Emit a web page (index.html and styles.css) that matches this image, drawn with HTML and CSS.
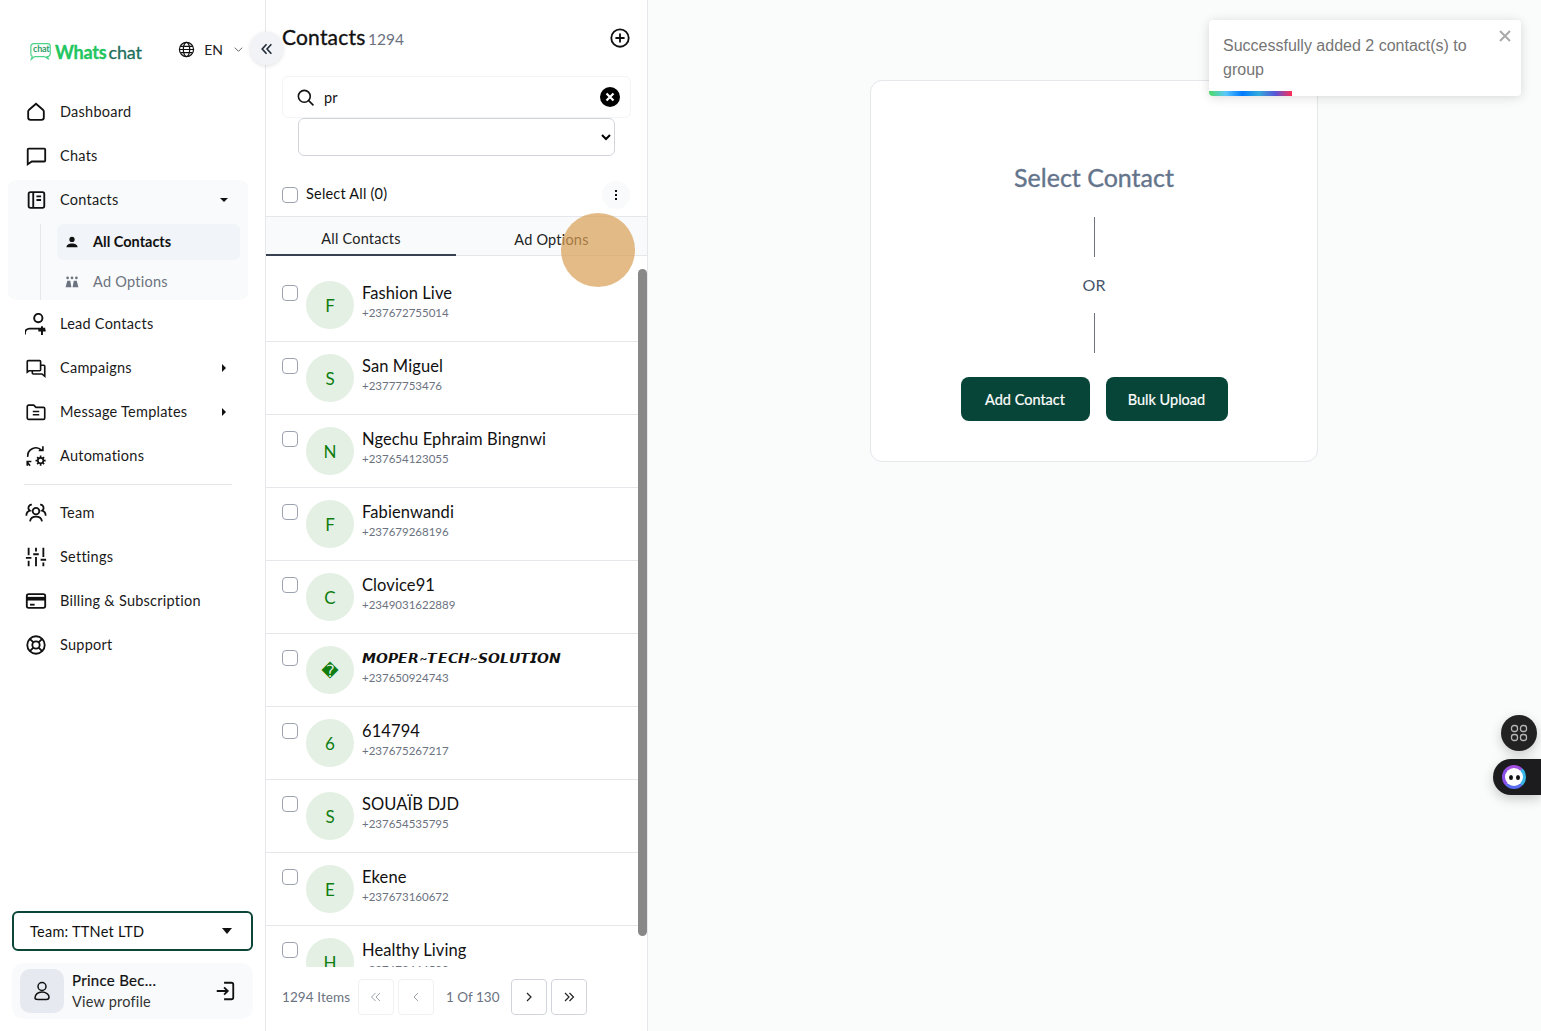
FILE: index.html
```html
<!DOCTYPE html>
<html lang="en">
<head>
  <meta charset="UTF-8" />
  <meta name="viewport" content="width=device-width, initial-scale=1" />
  <title>Contacts - Whatschat</title>
  <link rel="stylesheet" href="styles.css">
</head>
<body>
  <aside class="sidebar">
    <div class="brand-row">
      <div class="logo">
        <svg class="logo-mark" viewBox="0 0 26 20" fill="none" stroke="#4cd38a" stroke-width="1.3"><path d="M5 1.500h15a3 3 0 0 1 3 3v8a3 3 0 0 1-3 3h-.5l2 3-5-3H6l-3.500 3 1-3.200A3 3 0 0 1 2 12.500v-8a3 3 0 0 1 3-3z"/></svg>
        <span class="logo-mini">chat</span>
        <span class="logo-a">Whats</span><span class="logo-b">chat</span>
      </div>
      <div class="lang">
        <svg viewBox="0 0 24 24" fill="none" stroke="#111" stroke-width="1.700"><circle cx="12" cy="12" r="10"/><ellipse cx="12" cy="12" rx="4.500" ry="10"/><path d="M2 12h20M3.500 7.500h17M3.500 16.500h17"/></svg>
        <span>EN</span>
        <svg class="lang-caret" viewBox="0 0 12 12" fill="none" stroke="#555" stroke-width="1"><path d="M2 4l4 4 4-4"/></svg>
      </div>
    </div>
    <button class="collapse" type="button" aria-label="Collapse">
      <svg viewBox="0 0 16 16" fill="none" stroke="#1f2937" stroke-width="1.800"><path d="M7.500 2.500 2.500 8l5 5.500M13 2.500 8 8l5 5.500"/></svg>
    </button>

    <nav class="nav">
      <a class="nav-item"><svg viewBox="0 0 24 24" fill="none" stroke="#111" stroke-width="2"><path d="M3.500 11.500c0-.8.300-1.400 1-2L12 3l7.500 6.500c.7.600 1 1.200 1 2V18a2.500 2.500 0 0 1-2.500 2.500H6A2.500 2.500 0 0 1 3.500 18z"/></svg><span>Dashboard</span></a>
      <a class="nav-item"><svg viewBox="0 0 24 24" fill="none" stroke="#111" stroke-width="2"><path d="M4 4h17a1 1 0 0 1 1 1v12a1 1 0 0 1-1 1H7.500L3 21V5a1 1 0 0 1 1-1z"/></svg><span>Chats</span></a>

      <div class="nav-group">
        <a class="nav-item"><svg viewBox="0 0 24 24" fill="none" stroke="#111" stroke-width="2"><rect x="4" y="3.500" width="17" height="17" rx="2"/><path d="M9 3.500v17M12.500 8h5M12.500 12h5"/></svg><span>Contacts</span><i class="caret-down"></i></a>
        <div class="sub-list">
          <a class="sub-item active"><svg viewBox="0 0 24 24" fill="#111"><circle cx="12" cy="7.500" r="4.500"/><path d="M2.500 21c0-4.500 4.500-6.500 9.500-6.500s9.500 2 9.500 6.500z"/></svg><span>All Contacts</span></a>
          <a class="sub-item"><svg viewBox="0 0 24 24" fill="#6b7280"><circle cx="4.500" cy="5" r="2.300"/><circle cx="12" cy="5" r="2.300"/><circle cx="19.500" cy="5" r="2.300"/><path d="M1 21l3-11h5l2 11zM13 21l2-11h5l3 11z"/></svg><span>Ad Options</span></a>
        </div>
      </div>

      <a class="nav-item"><svg viewBox="0 0 24 24" fill="none" stroke="#111" stroke-width="2.100"><circle cx="14.500" cy="5.500" r="4.500"/><path d="M0 23.500v-1.500a5 5 0 0 1 5-5h17M18.500 14.500v9.500M14.500 19h8"/></svg><span>Lead Contacts</span></a>
      <a class="nav-item"><svg viewBox="0 0 24 24" fill="none" stroke="#111" stroke-width="1.800"><path d="M7 15H4.500l-2 1.500V5a1 1 0 0 1 1-1H16a1 1 0 0 1 1 1v9a1 1 0 0 1-1 1z"/><path d="M17 9h3.500a1 1 0 0 1 1 1v11l-3-2.500H9a1 1 0 0 1-1-1V15"/></svg><span>Campaigns</span><i class="caret-right"></i></a>
      <a class="nav-item"><svg viewBox="0 0 24 24" fill="none" stroke="#111" stroke-width="1.800"><path d="M2.500 6a1.500 1.500 0 0 1 1.500-1.500h5.500l2.500 2.500h8A1.500 1.500 0 0 1 21.500 8.500v10A1.500 1.500 0 0 1 20 20H4a1.500 1.500 0 0 1-1.500-1.500z"/><path d="M8.500 11.500h7M8.500 15h7"/></svg><span>Message Templates</span><i class="caret-right"></i></a>
      <a class="nav-item"><svg viewBox="0 0 24 24" fill="none" stroke="#111" stroke-width="1.800"><path d="M3 13a9 9 0 0 1 15-7.500M2 18l3.500 4.500M2.500 22.500V18H7M19.500 1.500v4.500H15"/><circle cx="17" cy="17" r="3"/><path d="M17 11.500v2.500M17 20v2.500M11.500 17H14M20 17h2.500M13.200 13.200l1.700 1.700M19.100 19.100l1.700 1.700M13.200 20.800l1.700-1.700M19.100 14.900l1.700-1.700"/></svg><span>Automations</span></a>
      <hr class="nav-rule">
      <a class="nav-item"><svg viewBox="0 0 24 24" fill="none" stroke="#111" stroke-width="1.900"><circle cx="12" cy="10" r="3.600"/><path d="M5.500 21c.5-3 3-5 6.500-5s6 2 6.500 5M7.500 3a3.500 3.500 0 0 0-2 6.500c-2.500.7-4 2.500-4 5.500M16.500 3a3.500 3.500 0 0 1 2 6.500c2.500.7 4 2.500 4 5.500"/></svg><span>Team</span></a>
      <a class="nav-item"><svg viewBox="0 0 24 24" fill="none" stroke="#111" stroke-width="2"><path d="M4 2v8M4 16v6M12 2v4M12 12v10M20 2v10M20 18v4M1 13h6M9 9h6M17 15h6" /></svg><span>Settings</span></a>
      <a class="nav-item"><svg viewBox="0 0 24 24" fill="none" stroke="#111" stroke-width="2"><rect x="2" y="4.500" width="20" height="15" rx="2"/><path d="M2 9.500h20" stroke-width="4"/><path d="M5.500 16h5"/></svg><span>Billing &amp; Subscription</span></a>
      <a class="nav-item"><svg viewBox="0 0 24 24" fill="none" stroke="#111" stroke-width="2"><circle cx="12" cy="12" r="9.500"/><circle cx="12" cy="12" r="4"/><path d="M5.300 5.300l3.900 3.900M18.700 5.300l-3.900 3.900M5.300 18.700l3.900-3.900M18.700 18.700l-3.900-3.900"/></svg><span>Support</span></a>
    </nav>

    <div class="side-bottom">
      <div class="team-select"><span>Team: TTNet LTD</span><i class="team-caret"></i></div>
      <div class="profile">
        <div class="profile-pic"><svg viewBox="0 0 24 24" fill="none" stroke="#111" stroke-width="1.500"><circle cx="12" cy="7.500" r="4"/><path d="M5 19c0-3.500 3-6 7-6s7 2.500 7 5c0 1.500-1 2.500-2.500 2.500H8C6 20.500 5 20 5 19z"/></svg></div>
        <div class="profile-text">
          <div class="profile-name">Prince Bec...</div>
          <div class="profile-link">View profile</div>
        </div>
        <svg class="logout" viewBox="0 0 24 24" fill="none" stroke="#111" stroke-width="2"><path d="M11 3h8a2 2 0 0 1 2 2v14a2 2 0 0 1-2 2h-8M3 12h12M11 8l4 4-4 4"/></svg>
      </div>
    </div>
  </aside>

  <section class="contacts">
    <div class="contacts-head">
      <h1>Contacts <span>1294</span></h1>
      <svg viewBox="0 0 24 24" fill="none" stroke="#111" stroke-width="2"><circle cx="12" cy="12" r="9.500"/><path d="M12 7v10M7 12h10"/></svg>
    </div>
    <div class="search">
      <svg class="search-icon" viewBox="0 0 24 24" fill="none" stroke="#111" stroke-width="2"><circle cx="10.500" cy="10.500" r="7.500"/><path d="M16 16l6 6"/></svg>
      <span class="search-text">pr</span>
      <svg class="search-clear" viewBox="0 0 20 20"><circle cx="10" cy="10" r="10" fill="#000"/><path d="M6.500 6.500l7 7M13.500 6.500l-7 7" stroke="#fff" stroke-width="2.200"/></svg>
    </div>
    <select class="filter"><option></option></select>
    <div class="select-all">
      <input type="checkbox" class="check">
      <span>Select All (0)</span>
      <button class="kebab" type="button" aria-label="More"><i></i><i></i><i></i></button>
    </div>
    <div class="tabs">
      <div class="tab active">All Contacts</div>
      <div class="tab">Ad Options</div>
    </div>

    <div class="list">
      <div class="row"><input type="checkbox" class="check"><div class="avatar">F</div><div><div class="name">Fashion Live</div><div class="phone">+237672755014</div></div></div>
      <div class="row"><input type="checkbox" class="check"><div class="avatar">S</div><div><div class="name">San Miguel</div><div class="phone">+23777753476</div></div></div>
      <div class="row"><input type="checkbox" class="check"><div class="avatar">N</div><div><div class="name">Ngechu Ephraim Bingnwi</div><div class="phone">+237654123055</div></div></div>
      <div class="row"><input type="checkbox" class="check"><div class="avatar">F</div><div><div class="name">Fabienwandi</div><div class="phone">+237679268196</div></div></div>
      <div class="row"><input type="checkbox" class="check"><div class="avatar">C</div><div><div class="name">Clovice91</div><div class="phone">+2349031622889</div></div></div>
      <div class="row"><input type="checkbox" class="check"><div class="avatar">&#xFFFD;</div><div><div class="name fancy">𝙈𝙊𝙋𝙀𝙍~𝙏𝙀𝘾𝙃~𝙎𝙊𝙇𝙐𝙏𝙄𝙊𝙉</div><div class="phone">+237650924743</div></div></div>
      <div class="row"><input type="checkbox" class="check"><div class="avatar">6</div><div><div class="name">614794</div><div class="phone">+237675267217</div></div></div>
      <div class="row"><input type="checkbox" class="check"><div class="avatar">S</div><div><div class="name">SOUAÏB DJD</div><div class="phone">+237654535795</div></div></div>
      <div class="row"><input type="checkbox" class="check"><div class="avatar">E</div><div><div class="name">Ekene</div><div class="phone">+237673160672</div></div></div>
      <div class="row"><input type="checkbox" class="check"><div class="avatar">H</div><div><div class="name">Healthy Living</div><div class="phone">+237672444500</div></div></div>
    </div>
    <div class="scroll-thumb"></div>

    <div class="pager">
      <span class="pager-count">1294 Items</span>
      <button class="page-btn off" type="button" aria-label="First"><svg viewBox="0 0 12 12" fill="none" stroke="currentColor" stroke-width="1"><path d="M5.500 2 1.500 6l4 4M10 2 6 6l4 4"/></svg></button>
      <button class="page-btn off" type="button" aria-label="Previous"><svg viewBox="0 0 12 12" fill="none" stroke="currentColor" stroke-width="1"><path d="M8 2 4 6l4 4"/></svg></button>
      <span class="pager-pos">1 Of 130</span>
      <button class="page-btn" type="button" aria-label="Next"><svg viewBox="0 0 12 12" fill="none" stroke="currentColor" stroke-width="1.200"><path d="M4 2l4 4-4 4"/></svg></button>
      <button class="page-btn" type="button" aria-label="Last"><svg viewBox="0 0 12 12" fill="none" stroke="currentColor" stroke-width="1.200"><path d="M2 2l4 4-4 4M6.500 2l4 4-4 4"/></svg></button>
    </div>
  </section>

  <main class="main">
    <div class="card">
      <h2>Select Contact</h2>
      <div class="vline"></div>
      <div class="or">OR</div>
      <div class="vline"></div>
      <div class="card-actions">
        <button class="btn add" type="button">Add Contact</button>
        <button class="btn bulk" type="button">Bulk Upload</button>
      </div>
    </div>
  </main>

  <div class="tap-dot"></div>

  <div class="toast">
    <div class="toast-text">Successfully added 2 contact(s) to group</div>
    <svg class="toast-close" viewBox="0 0 14 14" fill="none" stroke="#aaa" stroke-width="2"><path d="M2 2l10 10M12 2 2 12"/></svg>
    <div class="toast-bar"></div>
  </div>

  <div class="fab">
    <svg viewBox="0 0 20 20" fill="none" stroke="#b5b5b5" stroke-width="1.300"><rect x="2.500" y="2.500" width="6" height="6" rx="2.500"/><rect x="11.500" y="2.500" width="6" height="6" rx="2.500"/><rect x="2.500" y="11.500" width="6" height="6" rx="2.500"/><rect x="11.500" y="11.500" width="6" height="6" rx="2.500"/></svg>
  </div>
  <div class="bot-tab">
    <div class="bot-face"><i></i><i></i></div>
  </div>
</body>
</html>
```

FILE: styles.css
```css
* {
  box-sizing: border-box;
}
html, body {
  height: 100%;
}
body {
  margin: 0;
  height: 1031px;
  overflow: hidden;
  display: flex;
  background: #fafbfb;
  color: #111;
  font-family: 'Lato', 'DejaVu Sans', sans-serif;
  font-size: 15px;
  position: relative;
}
a {
  color: inherit;
  text-decoration: none;
}
button {
  font-family: inherit;
  cursor: pointer;
}

/* sidebar */
.sidebar {
  width: 266px;
  flex-shrink: 0;
  background: #fff;
  border-right: 1px solid #e5e7eb;
  display: flex;
  flex-direction: column;
  position: relative;
}
.brand-row {
  height: 90px;
  padding: 14px 21px 0 29px;
  display: flex;
  align-items: center;
  justify-content: space-between;
}
.logo {
  position: relative;
  display: flex;
  align-items: center;
  padding-left: 26px;
  font-size: 18px;
  font-weight: 700;
  letter-spacing: -0.2px;
}
.logo-mark {
  position: absolute;
  left: 0;
  top: 1px;
  width: 24px;
  height: 19px;
}
.logo-mini {
  position: absolute;
  left: 4px;
  top: 2px;
  font-size: 9px;
  font-weight: 700;
  color: #2f9e6b;
}
.logo-a {
  color: #22c55e;
  margin-right: 2px;
  -webkit-text-stroke: 0.3px #22c55e;
}
.logo-b {
  color: #1f6f5c;
  font-weight: 400;
  -webkit-text-stroke: 0.3px #1f6f5c;
}
.lang {
  display: flex;
  align-items: center;
  gap: 9px;
  margin-top: -5px;
  font-size: 14px;
  color: #222;
}
.lang svg {
  width: 17px;
  height: 17px;
}
.lang .lang-caret {
  width: 11px;
  height: 11px;
  margin-left: 1px;
}
.collapse {
  position: absolute;
  left: 250px;
  top: 32px;
  width: 33px;
  height: 33px;
  border: none;
  border-radius: 50%;
  background: #f1f3f6;
  box-shadow: 0 1px 4px rgba(0,0,0,0.12);
  display: flex;
  align-items: center;
  justify-content: center;
  padding: 0;
  z-index: 5;
}
.collapse svg {
  width: 14px;
  height: 14px;
}
.nav {
  width: 256px;
}
.nav-item {
  height: 44px;
  margin: 0 8px;
  padding: 0 16px;
  display: flex;
  align-items: center;
  gap: 12px;
  font-size: 14.500px;
  letter-spacing: 0.25px;
  color: #1a1a1a;
}
.nav-item span {
  margin-top: -1px;
}
.nav-item > svg {
  width: 24px;
  height: 24px;
  flex-shrink: 0;
  transform: scale(0.92);
}
.nav-group {
  margin: 2px 8px;
  height: 120px;
  background: #f9fafb;
  border-radius: 8px;
}
.nav-group .nav-item {
  margin: 0;
  height: 40px;
}
.caret-down {
  margin-left: auto;
  margin-right: 4px;
  border-left: 4px solid transparent;
  border-right: 4px solid transparent;
  border-top: 4px solid #111;
}
.caret-right {
  margin-left: auto;
  margin-right: 6px;
  border-top: 4px solid transparent;
  border-bottom: 4px solid transparent;
  border-left: 4px solid #111;
}
.sub-list {
  margin: 4px 8px 0 32px;
  padding-left: 16px;
  border-left: 1px solid #e5e7eb;
  display: flex;
  flex-direction: column;
  gap: 4px;
}
.sub-item {
  height: 36px;
  padding: 0 8px;
  display: flex;
  align-items: center;
  gap: 14px;
  border-radius: 6px;
  font-size: 14.500px;
  letter-spacing: 0.25px;
  color: #6b7280;
}
.sub-item span {
  margin-top: -1px;
}
.sub-item svg {
  width: 14px;
  height: 14px;
}
.sub-item.active {
  background: #f1f4f8;
  color: #111;
  font-weight: 700;
  letter-spacing: 0;
}
.nav-rule {
  margin: 6px 24px;
  border: none;
  border-top: 1px solid #e5e7eb;
}
.side-bottom {
  margin-top: auto;
  padding: 0 12px 12px;
  display: flex;
  flex-direction: column;
  gap: 12px;
}
.team-select {
  height: 40px;
  padding: 0 19px 0 16px;
  border: 2px solid #0b4638;
  border-radius: 6px;
  display: flex;
  align-items: center;
  justify-content: space-between;
  font-size: 14.500px;
  letter-spacing: 0.25px;
}
.team-caret {
  border-left: 5px solid transparent;
  border-right: 5px solid transparent;
  border-top: 6px solid #111;
}
.profile {
  height: 56px;
  padding: 0 17px 0 8px;
  background: #f9fafb;
  border-radius: 12px;
  display: flex;
  align-items: center;
  gap: 8px;
}
.profile-pic {
  width: 44px;
  height: 44px;
  border-radius: 10px;
  background: #e6eaf0;
  display: flex;
  align-items: center;
  justify-content: center;
}
.profile-pic svg {
  width: 24px;
  height: 24px;
}
.profile-text {
  flex: 1;
  line-height: 22px;
}
.profile-name {
  font-size: 15px;
  letter-spacing: 0.3px;
  -webkit-text-stroke: 0.2px #111;
}
.profile-link {
  font-size: 14.500px;
  letter-spacing: 0.2px;
  color: #333;
}
.logout {
  width: 22px;
  height: 22px;
}

/* contacts column */
.contacts {
  width: 382px;
  flex-shrink: 0;
  background: #fff;
  border-right: 1px solid #e5e7eb;
  display: flex;
  flex-direction: column;
  position: relative;
}
.contacts-head {
  height: 76px;
  padding: 0 16px;
  display: flex;
  align-items: center;
  justify-content: space-between;
}
.contacts-head h1 {
  margin: -3px 0 0;
  font-size: 21px;
  font-weight: 400;
  letter-spacing: 0.2px;
  -webkit-text-stroke: 0.35px #111;
}
.contacts-head h1 span {
  margin-left: -3px;
  font-size: 15.500px;
  font-weight: 400;
  color: #6b7280;
  letter-spacing: 0;
  -webkit-text-stroke: 0;
}
.contacts-head svg {
  width: 22px;
  height: 22px;
}
.search {
  height: 42px;
  margin: 0 16px;
  padding: 0 10px 0 13px;
  border: 1px solid #f3f4f6;
  border-radius: 6px;
  display: flex;
  align-items: center;
  gap: 9px;
}
.search-icon {
  width: 19px;
  height: 19px;
}
.search-text {
  flex: 1;
  font-size: 14.500px;
}
.search-clear {
  width: 20px;
  height: 20px;
}
.filter {
  height: 38px;
  margin: 0 32px;
  width: 317px;
  background: #fff;
  border: 1px solid #d1d5db;
  border-radius: 6px;
  font-size: 14px;
}
.select-all {
  height: 60px;
  padding: 17px 17px 0 16px;
  display: flex;
  align-items: center;
  gap: 8px;
  font-size: 14.500px;
  letter-spacing: 0.2px;
}
.select-all span {
  margin-top: -2px;
}
.kebab {
  width: 28px;
  height: 28px;
  margin-left: auto;
  padding: 0;
  border: none;
  border-radius: 50%;
  background: #f9fafb;
  display: flex;
  flex-direction: column;
  align-items: center;
  justify-content: center;
  gap: 2px;
}
.kebab i {
  width: 2px;
  height: 2px;
  background: #111;
}
.check {
  appearance: none;
  width: 16px;
  height: 16px;
  margin: 0;
  flex-shrink: 0;
  background: #fff;
  border: 1px solid #9ca3af;
  border-radius: 4px;
}
.tabs {
  height: 40px;
  background: #f9fafb;
  border-top: 1px solid #e5e7eb;
  border-bottom: 1px solid #e5e7eb;
  display: flex;
}
.tab {
  flex: 1;
  margin-bottom: -1px;
  padding-top: 5px;
  display: flex;
  align-items: center;
  justify-content: center;
  font-size: 14.500px;
  letter-spacing: 0.2px;
  color: #222;
}
.tab.active {
  flex: none;
  width: 190px;
  border-bottom: 2px solid #374151;
}
.list {
  flex: 1;
  min-height: 0;
  margin-top: 13px;
  overflow: hidden;
}
.row {
  height: 73px;
  padding: 12px 16px 0;
  border-bottom: 1px solid #e5e7eb;
  display: flex;
  align-items: flex-start;
  gap: 8px;
}
.row .check {
  margin-top: 4px;
}
.avatar {
  width: 48px;
  height: 48px;
  border-radius: 50%;
  background: #e4f0e4;
  color: #0f7d0f;
  display: flex;
  align-items: center;
  justify-content: center;
  font-size: 17px;
  flex-shrink: 0;
}
.name {
  font-size: 16.500px;
  line-height: 24px;
  letter-spacing: 0.1px;
  color: #111;
}
.name.fancy {
  font-size: 13.500px;
}
.phone {
  font-size: 11.500px;
  line-height: 15px;
  color: #6b7280;
}
.scroll-thumb {
  position: absolute;
  right: 0;
  top: 269px;
  width: 9px;
  height: 667px;
  background: #888;
  border-radius: 5px;
}
.pager {
  height: 64px;
  padding: 0 16px 4px;
  display: flex;
  align-items: center;
  font-size: 13.500px;
  color: #6b7280;
}
.pager-count {
  width: 76px;
  letter-spacing: 0.1px;
}
.page-btn {
  width: 36px;
  height: 36px;
  margin-right: 4px;
  padding: 0;
  background: #fff;
  border: 1px solid #d1d5db;
  border-radius: 4px;
  color: #222;
  display: flex;
  align-items: center;
  justify-content: center;
}
.page-btn svg {
  width: 12px;
  height: 12px;
}
.page-btn.off {
  border-color: #f0f1f3;
  color: #9ca3af;
}
.pager-pos {
  width: 73px;
  padding-left: 8px;
  white-space: nowrap;
}

/* right panel */
.main {
  flex: 1;
  padding: 80px 1px 0 0;
}
.card {
  width: 448px;
  height: 382px;
  margin: 0 auto;
  padding-top: 80px;
  background: #fff;
  border: 1px solid #e5e7eb;
  border-radius: 12px;
  display: flex;
  flex-direction: column;
  align-items: center;
}
.card h2 {
  margin: 0 0 24px;
  font-size: 25px;
  line-height: 32px;
  font-weight: 400;
  color: #64748b;
  -webkit-text-stroke: 0.35px #64748b;
}
.vline {
  width: 1px;
  height: 40px;
  background: #6b7280;
}
.or {
  height: 56px;
  line-height: 56px;
  font-size: 16px;
  color: #475569;
}
.card-actions {
  margin-top: 24px;
  display: flex;
  gap: 16px;
}
.btn {
  height: 44px;
  padding: 0;
  border: none;
  border-radius: 8px;
  background: #064537;
  color: #fff;
  font-size: 14.500px;
  -webkit-text-stroke: 0.2px #fff;
}
.btn.add {
  width: 129px;
}
.btn.bulk {
  width: 122px;
}

/* overlays */
.tap-dot {
  position: absolute;
  left: 561px;
  top: 213px;
  width: 74px;
  height: 74px;
  border-radius: 50%;
  background: rgba(216, 158, 84, 0.7);
}
.toast {
  position: absolute;
  left: 1209px;
  top: 20px;
  width: 312px;
  height: 76px;
  padding: 14px 14px;
  background: #fff;
  border-radius: 4px;
  box-shadow: 0 1px 10px rgba(0,0,0,0.1), 0 2px 15px rgba(0,0,0,0.05);
  overflow: hidden;
}
.toast-text {
  width: 260px;
  font-family: 'Liberation Sans', Arial, sans-serif;
  font-size: 16px;
  line-height: 24px;
  color: #757575;
}
.toast-close {
  position: absolute;
  right: 9px;
  top: 9px;
  width: 14px;
  height: 14px;
}
.toast-bar {
  position: absolute;
  left: 0;
  bottom: 0;
  width: 83px;
  height: 5px;
  background: linear-gradient(to right, #4cd964, #5ac8fa, #007aff, #34aadc, #5856d6, #ff2d55);
}
.fab {
  position: absolute;
  left: 1501px;
  top: 715px;
  width: 36px;
  height: 36px;
  border-radius: 50%;
  background: #222;
  box-shadow: 0 4px 12px rgba(0,0,0,0.2);
  display: flex;
  align-items: center;
  justify-content: center;
}
.fab svg {
  width: 20px;
  height: 20px;
}
.bot-tab {
  position: absolute;
  left: 1493px;
  top: 759px;
  width: 48px;
  height: 36px;
  padding-left: 9px;
  border-radius: 18px 0 0 18px;
  background: #1c1c1e;
  box-shadow: 0 4px 12px rgba(0,0,0,0.2);
  display: flex;
  align-items: center;
}
.bot-face {
  width: 24px;
  height: 24px;
  border: 3px solid #5b6cf0;
  border-top-color: #a34fe0;
  border-left-color: #8a4fe8;
  border-right-color: #38b6e8;
  border-radius: 50%;
  background: #fff;
  display: flex;
  align-items: center;
  justify-content: center;
  gap: 3px;
}
.bot-face i {
  width: 4px;
  height: 5px;
  border-radius: 50%;
  background: #111;
}
```
